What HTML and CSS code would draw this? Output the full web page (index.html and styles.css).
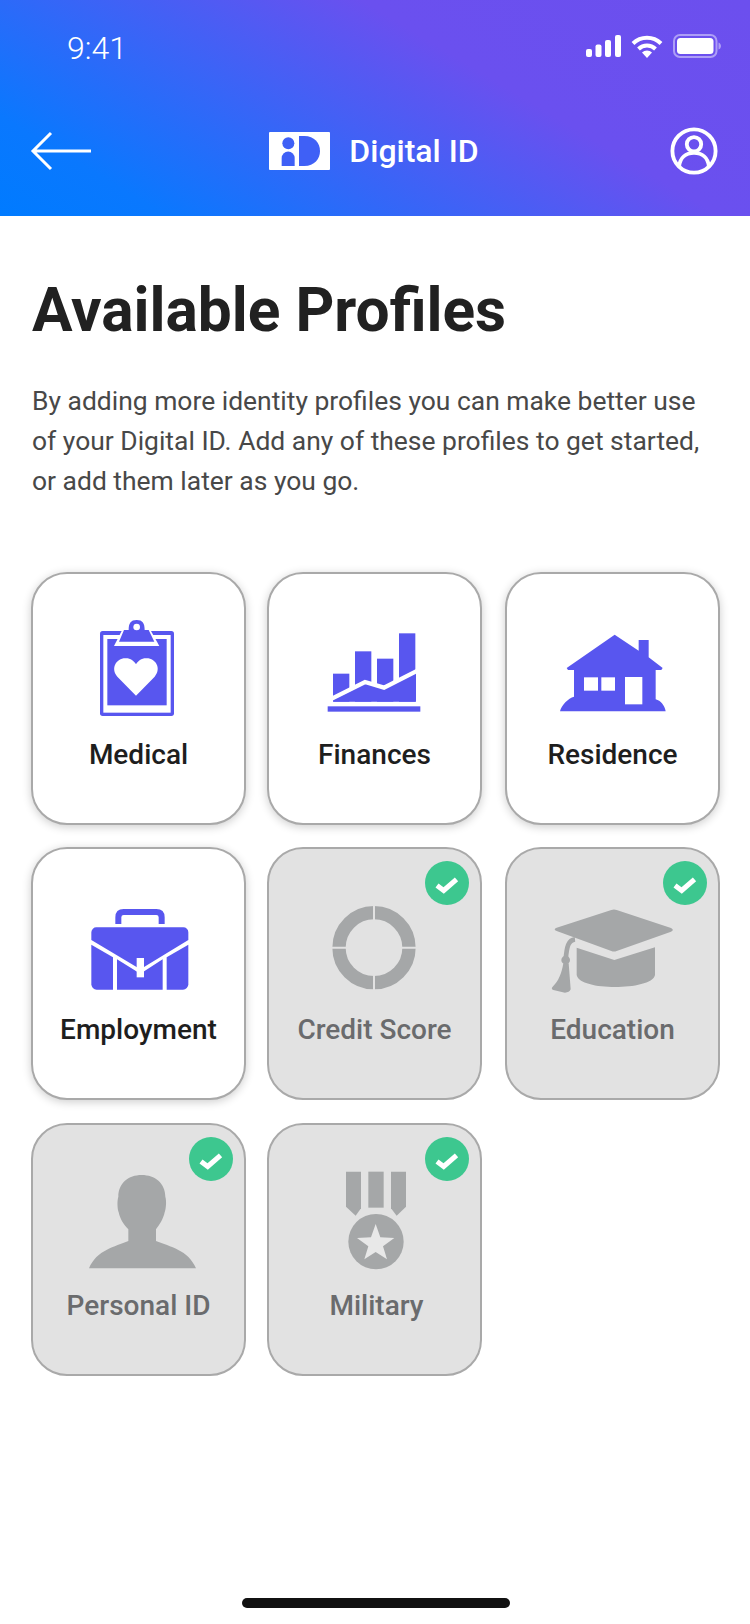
FILE: index.html
```html
<!DOCTYPE html>
<html lang="en">
<head>
<meta charset="utf-8">
<title>Available Profiles</title>
<link rel="stylesheet" href="styles.css">
</head>
<body>
<div class="screen">
  <header class="header">
    <div class="status">
      <span class="time">9:41</span>
      <div class="status-icons">
        <svg class="ic-signal" viewBox="0 0 35 22"><rect x="0" y="14" width="6" height="8" rx="2"/><rect x="9.5" y="9.5" width="6" height="12.5" rx="2"/><rect x="19" y="5" width="6" height="17" rx="2"/><rect x="29" y="0" width="6" height="22" rx="2"/></svg>
        <svg class="ic-wifi" viewBox="0 0 32 23"><path class="arc" d="M2 8.500a20 20 0 0 1 28 0"/><path class="arc" d="M7.500 14a12.300 12.300 0 0 1 17 0"/><path d="M11 17.500a7.500 7.500 0 0 1 10 0L16 23z"/></svg>
        <svg class="ic-batt" viewBox="0 0 48 24"><rect class="batt-o" x="1" y="1" width="42.500" height="22" rx="6"/><rect x="4" y="4" width="36.500" height="16" rx="3.500"/><path class="batt-n" d="M45.500 8.500c1.500.5 2.500 2 2.500 3.500s-1 3-2.500 3.500z"/></svg>
      </div>
    </div>
    <nav class="nav">
      <svg class="ic-back" viewBox="0 0 62 40"><path d="M61 20H3M21 2 3 20l18 18"/></svg>
      <div class="brand">
        <svg class="logo" viewBox="0 0 183 114"><rect width="183" height="114" rx="3" fill="#fff"/><g class="logo-cut"><circle cx="58" cy="34" r="18"/><path d="M38 102V78a19.500 19.500 0 0 1 39 0v24z"/><path d="M90 12h16c30 0 47 21 47 45s-17 45-47 45H90z"/></g></svg>
        <span class="brand-name">Digital ID</span>
      </div>
      <svg class="ic-user" viewBox="0 0 50 50"><circle cx="25" cy="25" r="22.500"/><circle cx="25" cy="18" r="7.500"/><path d="M9.500 41c1-9 7-14 15.500-14s14.500 5 15.500 14"/></svg>
    </nav>
  </header>

  <main class="content">
    <h1 class="title">Available Profiles</h1>
    <p class="intro">By adding more identity profiles you can make better use<br>of your Digital ID. Add any of these profiles to get started,<br>or add them later as you go.</p>

    <div class="grid">
      <div class="card">
        <svg class="icon" viewBox="39 42 633 450">
          <rect x="240" y="213" width="222" height="255" rx="8"/>
          <rect x="250" y="225" width="202" height="233" fill="#fff"/>
          <rect x="262" y="237" width="178" height="199"/>
          <polygon points="305,213 393,213 418,258 282,258" fill="#fff"/>
          <path d="M312 210h14c0-20 6-30 24-30s24 10 24 30h12l17 35H297z"/>
          <circle cx="350" cy="201" r="10" fill="#fff"/>
          <path fill="#fff" d="M348 407 292 350C270 325 290 293 318 295 332 295 342 303 348 313 354 303 364 295 378 295 406 293 426 325 404 350Z"/>
        </svg>
        <span class="label">Medical</span>
      </div>
      <div class="card">
        <svg class="icon" viewBox="27 42 633 450">
          <rect x="219" y="341" width="49" height="84"/>
          <rect x="285" y="274" width="49" height="151"/>
          <rect x="351" y="296" width="49" height="129"/>
          <rect x="417" y="220" width="49" height="205"/>
          <polygon points="218,425 315,366 372,383 468,335 468,425"/>
          <polyline class="gap" points="205,421 315,366 372,383 480,328"/>
          <rect x="203" y="439" width="278" height="16"/>
        </svg>
        <span class="label">Finances</span>
      </div>
      <div class="card">
        <svg class="icon" viewBox="21 42 633 450">
          <path d="M344 224 416 272V240H446V292L488 324 484 330H467V418C482 422 494 436 497 454H180C184 436 205 414 222 410V330H204L200 324Z"/>
          <rect x="252" y="352" width="42" height="40" fill="#fff"/>
          <rect x="304" y="352" width="41" height="40" fill="#fff"/>
          <rect x="375" y="351" width="52" height="82" fill="#fff"/>
        </svg>
        <span class="label">Residence</span>
      </div>
      <div class="card">
        <svg class="icon" viewBox="39 27 633 450">
          <path class="handle" d="M295 252V232Q295 216 311 216H409Q425 216 425 232V252"/>
          <path d="M230 262H490A15 15 0 0 1 505 277V300L361 388 214 300V277A15 15 0 0 1 230 262Z"/>
          <path d="M214 314 279 352V449H230A16 16 0 0 1 214 433Z"/>
          <path d="M291 358 361 401 428 358V449H291Z"/>
          <path d="M440 352 505 314V433A16 16 0 0 1 489 449H440Z"/>
          <rect x="350" y="354" width="22" height="58" fill="#fff"/>
        </svg>
        <span class="label">Employment</span>
      </div>
      <div class="card done">
        <span class="badge"><svg viewBox="-22 -22 44 44"><path d="M-10 2.500-3.300 7.500 9.500-3.700"/></svg></span>
        <svg class="icon" viewBox="27 27 633 450">
          <circle class="ring" cx="342" cy="323" r="105"/>
          <path class="cross" d="M342 190V456M209 323H475"/>
        </svg>
        <span class="label">Credit Score</span>
      </div>
      <div class="card done">
        <span class="badge"><svg viewBox="-22 -22 44 44"><path d="M-10 2.500-3.300 7.500 9.500-3.700"/></svg></span>
        <svg class="icon" viewBox="21 27 633 450">
          <path d="M334 210Q342 207 350 210L513 264Q524 270 513 275L350 333Q342 336 334 333L170 273Q158 268 170 263Z"/>
          <path d="M230 323 343 360 465 322V405C460 430 400 441 345 441 290 441 235 430 230 405Z"/>
          <path class="tassel" d="M225 298C205 300 200 320 197 360"/>
          <circle cx="197" cy="360" r="13"/>
          <path d="M190 370H206L212 448Q208 458 195 458L160 450Q152 446 158 440C175 425 185 400 190 370Z"/>
        </svg>
        <span class="label">Education</span>
      </div>
      <div class="card done">
        <span class="badge"><svg viewBox="-22 -22 44 44"><path d="M-10 2.500-3.300 7.500 9.500-3.700"/></svg></span>
        <svg class="icon" viewBox="39 30 633 450">
          <path d="M365 180C405 180 436 205 436 245 440 258 438 280 434 292 430 312 418 330 408 343V378C450 395 505 405 528 460H207C230 405 285 395 325 378V343C312 330 300 312 296 292 292 280 291 258 295 245 295 205 325 180 365 180Z"/>
        </svg>
        <span class="label">Personal ID</span>
      </div>
      <div class="card done">
        <span class="badge"><svg viewBox="-22 -22 44 44"><path d="M-10 2.500-3.300 7.500 9.500-3.700"/></svg></span>
        <svg class="icon" viewBox="27 30 633 450">
          <polygon points="258,170 303,170 303,280 287,302 258,275"/>
          <rect x="325" y="170" width="46" height="108"/>
          <polygon points="393,170 438,170 438,275 410,302 393,280"/>
          <circle cx="348" cy="380" r="83"/>
          <polygon class="star" points="347,327 361,367 403,369 369,394 381,433 347,411 313,433 325,394 291,369 333,367"/>
        </svg>
        <span class="label label-nudge">Military</span>
      </div>
    </div>
  </main>

  <div class="home-bar"></div>
</div>
</body>
</html>
```

FILE: styles.css
```css
* { box-sizing: border-box; }
html, body { margin: 0; padding: 0; background: #fff; }
body { font-family: Roboto, "Liberation Sans", sans-serif; }

.screen {
  width: 750px;
  height: 1624px;
  display: flex;
  flex-direction: column;
  overflow: hidden;
  background: #fff;
}

.header {
  height: 216px;
  flex: none;
  color: #fff;
  background: linear-gradient(31deg, #007bff 0%, #0a78fe 15%, #6a50ef 65%, #6c4fee 100%);
}

.status {
  height: 96px;
  padding: 0 29px 0 67px;
  display: flex;
  align-items: center;
  justify-content: space-between;
}
.time { font-size: 32px; font-weight: 300; line-height: 96px; }
.status-icons { display: flex; align-items: center; gap: 10px; margin-bottom: 4px; }
.status-icons svg { display: block; fill: #fff; }
.ic-signal { width: 35px; height: 22px; }
.ic-wifi { width: 32px; height: 23px; }
.ic-batt { width: 48px; height: 24px; }
.arc { fill: none; stroke: #fff; stroke-width: 4; }
.batt-o { fill: none; stroke: rgba(255,255,255,.45); stroke-width: 2; }
.batt-n { fill: rgba(255,255,255,.45); }

.nav {
  height: 110px;
  padding: 0 32px 0 30px;
  display: flex;
  align-items: center;
  justify-content: space-between;
}
.ic-back { width: 62px; height: 40px; display: block; fill: none; stroke: #fff; stroke-width: 3; }
.ic-user { width: 48px; height: 48px; display: block; fill: none; stroke: #fff; stroke-width: 4; }
.brand { display: flex; align-items: center; gap: 19px; margin-right: 14px; }
.logo { width: 61px; height: 38px; display: block; }
.logo-cut { fill: #3f60f6; }
.brand-name { font-size: 32px; font-weight: 500; line-height: 40px; }

.content { padding: 0 0 0 31px; }
.title {
  margin: 60px 0 0 1px;
  font-size: 60.4px;
  font-weight: 700;
  line-height: 70px;
  color: #212121;
}
.intro {
  margin: 35px 0 0 1px;
  font-size: 26.45px;
  font-weight: 400;
  line-height: 40px;
  color: #484848;
}

.grid {
  margin-top: 71px;
  display: grid;
  grid-template-columns: 236px 238px 215px;
  grid-template-rows: 275px 276px 253px;
}

.card {
  position: relative;
  width: 215px;
  height: 253px;
  border: 2px solid #a9a9a9;
  border-radius: 36px;
  background: #fff;
  box-shadow: 0 2px 10px rgba(0,0,0,.2);
  display: flex;
  flex-direction: column;
  align-items: center;
}
.card.done { background: #e2e2e2; box-shadow: none; }

.icon { width: 211px; height: 150px; display: block; flex: none; fill: #5856ef; }
.done .icon { fill: #a5a7a8; }
.gap { fill: none; stroke: #fff; stroke-width: 13; }
.handle { fill: none; stroke: #5856ef; stroke-width: 18; }
.ring { fill: none; stroke: #a5a7a8; stroke-width: 40; }
.cross { fill: none; stroke: #e2e2e2; stroke-width: 6; }
.tassel { fill: none; stroke: #a5a7a8; stroke-width: 14; }
.star { fill: #e8e8e8; }

.label {
  margin-top: 14px;
  font-size: 28px;
  font-weight: 500;
  line-height: 34px;
  color: #1e1e1e;
}
.label-nudge { margin-left: 4px; }
.done .label { color: #6a6b6d; }

.badge {
  position: absolute;
  top: 12px;
  right: 11px;
  width: 44px;
  height: 44px;
  border-radius: 50%;
  background: #3dc78f;
}
.badge svg { display: block; width: 44px; height: 44px; fill: none; stroke: #fff; stroke-width: 5; }

.home-bar {
  width: 268px;
  height: 10px;
  margin: auto 0 16px 242px;
  border-radius: 5px;
  background: #111;
  flex: none;
}
```
